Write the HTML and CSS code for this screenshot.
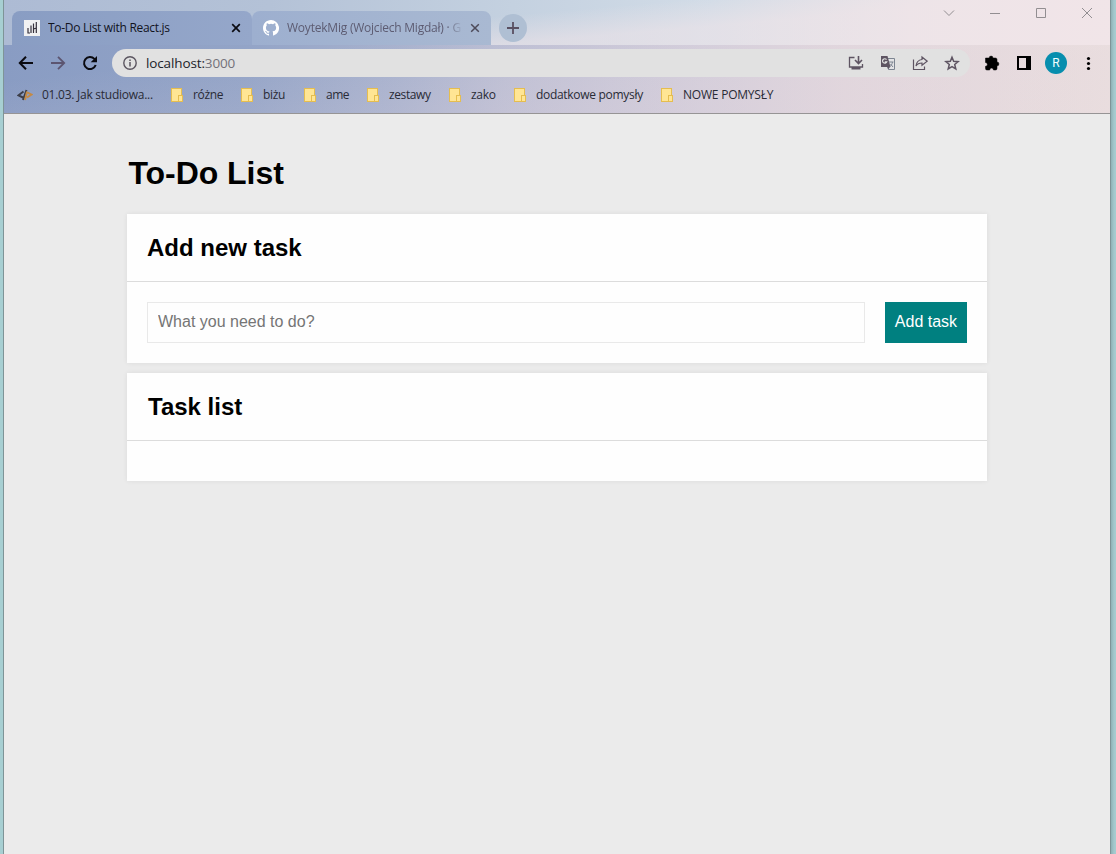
FILE: index.html
```html
<!DOCTYPE html>
<html lang="en">
<head>
<meta charset="utf-8">
<title>To-Do List with React.js</title>
<link rel="stylesheet" href="styles.css">
</head>
<body>
<div class="window">
  <header class="chrome">
    <div class="tabstrip">
      <div class="strip-edge"></div>
      <div class="tab tab-active">
        <svg class="favicon" width="16" height="16" viewBox="0 0 16 16"><path fill="#f1f1f2" d="M0 0h16v16H0z"/><path d="M4 8v5.500M3.500 13H6M7 5.500V13M9.500 3.500V13M9.500 9l3-1M12.300 2v11" fill="none" stroke="#35303b" stroke-width="1.200"/></svg>
        <span class="tab-title title-one">To-Do List with React.js</span>
        <svg class="tab-close" width="10" height="10" viewBox="0 0 10 10"><path d="M1.200 1.200l7.600 7.600M8.800 1.200L1.200 8.800" stroke="#0b0b12" stroke-width="1.700"/></svg>
      </div>
      <div class="tab tab-idle">
        <svg class="favicon" width="16" height="16" viewBox="0 0 16 16"><path fill="#fff" d="M8 0C3.580 0 0 3.580 0 8c0 3.540 2.290 6.530 5.470 7.590.4.070.55-.17.55-.38v-1.490c-2.010.37-2.530-.49-2.690-.94-.09-.23-.48-.94-.82-1.130-.28-.15-.68-.52-.01-.53.63-.01 1.080.58 1.230.82.72 1.210 1.870.87 2.330.66.070-.52.28-.87.51-1.070-1.780-.2-3.640-.89-3.640-3.950 0-.87.31-1.590.82-2.150-.08-.2-.36-1.020.08-2.120 0 0 .67-.21 2.200.82a7.600 7.600 0 0 1 4 0c1.530-1.040 2.200-.82 2.200-.82.44 1.100.16 1.920.08 2.120.51.560.82 1.270.82 2.150 0 3.070-1.870 3.750-3.650 3.950.29.250.54.730.54 1.480v2.200c0 .21.15.46.55.38A8 8 0 0 0 8 0z"/></svg>
        <span class="tab-title title-two">WoytekMig (Wojciech Migdał) · G</span>
        <svg class="tab-close" width="10" height="10" viewBox="0 0 10 10"><path d="M1.200 1.200l7.600 7.600M8.800 1.200L1.200 8.800" stroke="#4d4a59" stroke-width="1.500"/></svg>
      </div>
      <div class="new-tab"><svg width="12" height="12" viewBox="0 0 12 12"><path d="M6 0v12M0 6h12" stroke="#594f61" stroke-width="1.800"/></svg></div>
      <div class="window-controls">
        <svg width="12" height="12" viewBox="0 0 12 12"><path d="M1 3.500l5 5 5-5" fill="none" stroke="#928e91"/></svg>
        <svg width="12" height="12" viewBox="0 0 12 12"><path d="M1 6.500h10" stroke="#928e91"/></svg>
        <svg width="12" height="12" viewBox="0 0 12 12"><path d="M1.500 1.500h9v9h-9z" fill="none" stroke="#928e91"/></svg>
        <svg width="12" height="12" viewBox="0 0 12 12"><path d="M1 1l10 10M11 1L1 11" stroke="#928e91"/></svg>
      </div>
    </div>
    <div class="toolbar">
      <div class="nav">
        <svg width="16" height="16" viewBox="0 0 16 16"><path d="M15 8H2M8 1.800L1.800 8 8 14.200" fill="none" stroke="#0a0a10" stroke-width="2"/></svg>
        <svg width="16" height="16" viewBox="0 0 16 16"><path d="M1 8h13M8 1.800L14.200 8 8 14.200" fill="none" stroke="#5c5570" stroke-width="1.800"/></svg>
        <svg width="16" height="16" viewBox="0 0 16 16"><path d="M13.700 10A6 6 0 1 1 12.400 3.900L13.500 5" fill="none" stroke="#0a0a10" stroke-width="2"/><path d="M15 1v6.300H8.700z" fill="#0a0a10"/></svg>
      </div>
      <div class="omnibox">
        <svg width="14" height="14" viewBox="0 0 14 14"><circle cx="7" cy="7" r="6.200" fill="none" stroke="#5b5560" stroke-width="1.400"/><path d="M7 6v4.500M7 3.400v1.500" stroke="#5b5560" stroke-width="1.500"/></svg>
        <span class="url">localhost:<span class="port">3000</span></span>
        <div class="omni-actions">
          <svg width="16" height="16" viewBox="0 0 16 16"><path d="M6.500 2.500h-5v9.500h13V9" fill="none" stroke="#5e5462" stroke-width="1.300"/><path d="M10.500 1v7M7 5l3.500 3.500L14 5" fill="none" stroke="#5e5462" stroke-width="1.600"/><path d="M3.500 12h9v2.500h-9z" fill="#5e5462"/></svg>
          <svg width="16" height="16" viewBox="0 0 16 16"><path d="M8 3.500h6.500v11h-6L7.500 12" fill="#e3e3e5" stroke="#7d8591"/><path d="M1 1h6.500L10.500 12H1z" fill="#5e5462"/><path d="M6.500 4.600a2.200 2.200 0 1 0 .3 2.200H4.800" fill="none" stroke="#e1e1e1" stroke-width="1.200"/><path d="M9 7h4.500M12.500 7c-.3 2-1.300 3.500-2.500 4.500M10.500 9l2.500 3" fill="none" stroke="#7d8591"/><path d="M7.500 12H10l-1.700 2.300z" fill="#5e5462"/></svg>
          <svg width="16" height="16" viewBox="0 0 16 16"><path d="M1.500 4.500v10h11V11.500" fill="none" stroke="#5e5462" stroke-width="1.200"/><path d="M10 2l5.200 4.200L10 10.300V8C7 8 5.200 9 4 11c.4-3.800 2.300-6 6-6.500z" fill="none" stroke="#5e5462" stroke-width="1.200"/></svg>
          <svg width="16" height="16" viewBox="0 0 16 16"><path d="M8 2.200l1.650 4.100 4.500.35-3.450 2.900 1.080 4.350L8 11.550 4.220 13.900 5.300 9.550l-3.450-2.900 4.500-.35z" fill="none" stroke="#5e5462" stroke-width="1.500"/></svg>
        </div>
      </div>
      <div class="tools">
        <svg width="16" height="16" viewBox="0 0 16 16"><path d="M1.500 3H5.200a1.900 1.900 0 1 1 3.800 0H11.500Q13 3 13 4.500V7a1.900 1.900 0 1 1 0 3.800v2.700Q13 15 11.500 15H9.500a1.900 1.900 0 0 0-3.800 0H3Q1.500 15 1.500 13.500V11.300a1.900 1.900 0 0 0 0-3.800z" fill="#000" stroke="#000" stroke-width=".5"/></svg>
        <svg width="16" height="16" viewBox="0 0 16 16"><path d="M1 1h14v14H1zM3 3v10h7V3z" fill="#000" fill-rule="evenodd"/></svg>
        <span class="avatar">R</span>
        <svg width="16" height="16" viewBox="0 0 16 16"><circle cx="8.500" cy="3.500" r="1.600"/><circle cx="8.500" cy="8.500" r="1.600"/><circle cx="8.500" cy="13.500" r="1.600"/></svg>
      </div>
    </div>
    <nav class="bookmarks">
      <a class="bookmark bookmark-code"><svg width="16" height="12" viewBox="0 0 16 12"><path d="M6.500 2.500L1.500 6.300 6 8.500M9.500 1L6 11" fill="none" stroke="#3c3e49" stroke-width="2"/><path d="M10.500 3.500l4 2-4.500 3M10 2.500L8 11" fill="none" stroke="#c48a45" stroke-width="1.900"/></svg><span class="w-jak">01.03. Jak studiowa...</span></a>
      <a class="bookmark"><i class="folder"></i><span class="w-rozne">różne</span></a>
      <a class="bookmark"><i class="folder"></i><span class="w-bizu">biżu</span></a>
      <a class="bookmark"><i class="folder"></i><span class="w-ame">ame</span></a>
      <a class="bookmark"><i class="folder"></i><span class="w-zestawy">zestawy</span></a>
      <a class="bookmark"><i class="folder"></i><span class="w-zako">zako</span></a>
      <a class="bookmark"><i class="folder"></i><span class="w-dodatkowe">dodatkowe pomysły</span></a>
      <a class="bookmark"><i class="folder"></i><span class="w-nowe">NOWE POMYSŁY</span></a>
    </nav>
  </header>
  <main class="page">
    <h1 class="page-title">To-Do List</h1>
    <section class="card">
      <h2 class="card-title">Add new task</h2>
      <form class="task-form">
        <input class="task-input" type="text" placeholder="What you need to do?">
        <button class="task-button" type="button">Add task</button>
      </form>
    </section>
    <section class="card">
      <h2 class="card-title list-title">Task list</h2>
      <div class="task-list"></div>
    </section>
  </main>
</div>
</body>
</html>
```
FILE: styles.css
```css
* { box-sizing: border-box; }
body {
  margin: 0;
  height: 854px;
  overflow: hidden;
  padding: 0 5px 0 3px;
  background: linear-gradient(90deg, #a7cfd2 0 1110px, #8eb1b5 1111px, #a3c8cc 1114px, #a5cdd0);
}
.window {
  height: 854px;
  border: solid #7e9497;
  border-width: 0 1px;
  background: #ebebeb;
  display: flex;
  flex-direction: column;
}
.chrome {
  height: 114px;
  border-bottom: 1px solid #969495;
  font-family: "Open Sans", "Noto Sans", sans-serif;
  font-size: 12px;
  background: linear-gradient(174deg, transparent 35%, rgba(226, 210, 220, .22) 75%),
    linear-gradient(90deg, #899cc3 0, #93a4c7 22%, #a8b2ce 36%, #bdbfd4 46%, #d3cedb 63%, #e1d7dd 76%, #ebe0df 100%);
}
.tabstrip {
  height: 45px;
  display: flex;
  align-items: flex-start;
  background: linear-gradient(175deg, transparent 42%, rgba(240, 228, 232, .55) 62%),
    linear-gradient(90deg, #adbbd4 0, #b4c2d7 24%, #c4d1e0 46%, #d2dce7 64%, #ebe4e8 82%, #f2e6e8 100%);
}
.strip-edge { width: 8px; }
.tab {
  height: 34px;
  margin-top: 11px;
  display: flex;
  align-items: center;
  padding-left: 12px;
}
.tab-active { width: 240px; border-radius: 8px 8px 0 0; background: linear-gradient(90deg, #899dc3, #95a7ca); color: #11131d; }
.tab-idle { width: 239px; border-radius: 8px 8px 0 0; background: linear-gradient(90deg, #9dafcf, #a9b9d2); color: #5d5c72; padding-left: 11px; }
.favicon { flex: none; margin-right: 8px; }
.tab-title { white-space: nowrap; overflow: hidden; padding-bottom: 1px; }
.title-one { width: 183px; letter-spacing: -.3px; }
.title-two { width: 176px; margin-right: 7px; letter-spacing: -.22px; -webkit-mask-image: linear-gradient(90deg, #000 160px, transparent 176px); mask-image: linear-gradient(90deg, #000 160px, transparent 176px); }
.tab-close { flex: none; }
.new-tab {
  width: 28px;
  height: 28px;
  margin: 14px 0 0 8px;
  border-radius: 50%;
  background: #afbfd3;
  display: flex;
  align-items: center;
  justify-content: center;
}
.window-controls { display: flex; gap: 34px; margin: 7px 17px 0 auto; }
.toolbar { height: 36px; display: flex; align-items: center; }
.nav { display: flex; gap: 16px; width: 108px; padding-left: 14px; }
.omnibox {
  width: 858px;
  height: 28px;
  border-radius: 14px;
  background: #e1e1e1;
  display: flex;
  align-items: center;
  padding: 0 10px 0 11px;
}
.url { margin-left: 9px; padding-bottom: 1px; font-size: 13.5px; letter-spacing: -.13px; color: #22232a; }
.port { color: #73717a; }
.omni-actions { display: flex; gap: 16px; margin-left: auto; }
.tools { display: flex; align-items: center; gap: 16px; padding-left: 14px; }
.avatar {
  width: 22px;
  height: 22px;
  margin: 0 -3px;
  border-radius: 50%;
  background: #078eae;
  color: #f1ffff;
  font: 12px/23px Roboto, sans-serif;
  text-align: center;
}
.bookmarks { height: 28px; display: flex; gap: 18px; align-items: center; padding-left: 13px; color: #292b36; }
.bookmark { display: flex; align-items: center; gap: 11px; white-space: nowrap; }
.bookmark span { padding-bottom: 1px; }
.bookmark-code { gap: 9px; }
.folder { position: relative; width: 11px; height: 14px; background: #ffe594; border: 1px solid #e5bd50; }
.folder::after { content: ""; position: absolute; right: -2px; bottom: -1px; width: 3px; height: 5px; background: #ffe594; border: 1px solid #e5bd50; }
.w-jak { width: 111px; letter-spacing: -.26px; }
.w-rozne { width: 30px; letter-spacing: -.35px; }
.w-bizu { width: 23px; letter-spacing: -.35px; }
.w-ame { width: 23px; letter-spacing: -.5px; }
.w-zestawy { width: 42px; letter-spacing: -.4px; }
.w-zako { width: 25px; letter-spacing: -.3px; }
.w-dodatkowe { width: 107px; letter-spacing: -.3px; }
.w-nowe { width: 92px; letter-spacing: -.22px; }
.page {
  width: 860px;
  margin-left: 123px;
  font-family: "Liberation Sans", Arial, sans-serif;
}
.page-title { margin: 41px 0 23px 1.500px; font-size: 32px; line-height: 36px; letter-spacing: -.05px; }
.card { margin-bottom: 10px; background: #fefefe; box-shadow: 0 0 5px rgba(0, 0, 0, .07); }
.card-title { margin: 0; height: 68px; padding: 0 20px; border-bottom: 1px solid #dcdcdc; font-size: 24px; line-height: 67px; }
.list-title { padding-left: 21px; }
.task-form { display: flex; gap: 20px; padding: 20px; }
.task-input { flex: 1; height: 41px; padding: 0 10px 2px; border: 1px solid #e9e9e9; background: #fefefe; font: 16px "Liberation Sans", Arial, sans-serif; }
.task-input::placeholder { color: #757575; }
.task-button { width: 82px; height: 41px; padding: 0 0 2px; border: 0; background: #008080; color: #fff; font: 16px "Liberation Sans", Arial, sans-serif; }
.task-list { height: 40px; }
```
